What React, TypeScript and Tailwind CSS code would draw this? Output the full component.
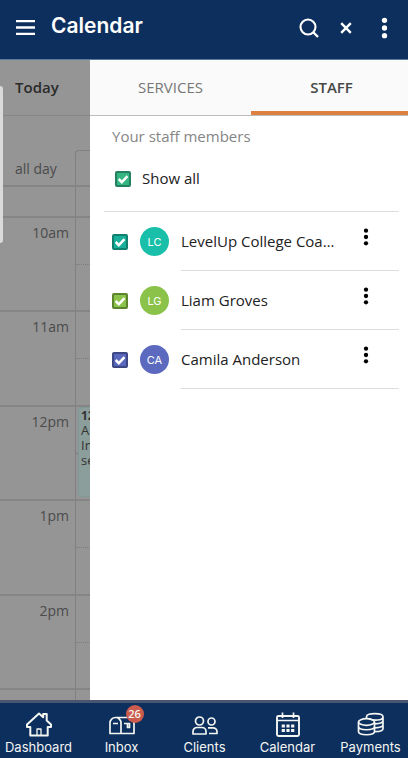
import { useState, type ReactNode } from "react"

type Member = {
  initials: string
  name: string
  avatar: string
  box: string
}

const members: Member[] = [
  { initials: "LC", name: "LevelUp College Coaching", avatar: "bg-[#19bfa8]", box: "border-[#12806f] bg-[#19b09b]" },
  { initials: "LG", name: "Liam Groves", avatar: "bg-[#8bc34a]", box: "border-[#5c842f] bg-[#8bc34a]" },
  { initials: "CA", name: "Camila Anderson", avatar: "bg-[#5b6abf]", box: "border-[#3c4783] bg-[#5968bd]" },
]

const hours = [
  { label: "10am", height: "h-[94px]" },
  { label: "11am", height: "h-[95px]" },
  { label: "12pm", height: "h-[94px]" },
  { label: "1pm", height: "h-[95px]" },
  { label: "2pm", height: "h-[94px]" },
]

const Dots = ({ className }: { className: string }) => (
  <svg viewBox="0 0 6 20" fill="currentColor" className={className} aria-hidden="true">
    <circle cx="3" cy="3" r="2.4" />
    <circle cx="3" cy="10" r="2.4" />
    <circle cx="3" cy="17" r="2.4" />
  </svg>
)

const Header = () => (
  <header className="flex h-15 shrink-0 items-center border-b border-[#5a7c9c] bg-[#0d2f5e] pb-1 pl-4 pr-5 text-white">
    <button type="button" aria-label="Menu">
      <svg viewBox="0 0 19 15" className="h-[15px] w-[19px]" stroke="currentColor" strokeWidth="2.3">
        <path d="M0 1.200h19M0 7.500h19M0 13.800h19" />
      </svg>
    </button>
    <h1 className="ml-4 pb-[3px] font-['Inter',sans-serif] text-[21px] leading-7 font-semibold">Calendar</h1>
    <div className="ml-auto flex items-center">
      <button type="button" aria-label="Search">
        <svg viewBox="0 0 20 20" className="size-5" fill="none" stroke="currentColor" strokeWidth="2.1">
          <circle cx="9" cy="9" r="7.500" />
          <path d="M14 14l5 5" strokeWidth="2.400" />
        </svg>
      </button>
      <button type="button" aria-label="Close" className="ml-[21px]">
        <svg viewBox="0 0 12 12" className="size-3" fill="none" stroke="currentColor" strokeWidth="2.400">
          <path d="M1.200 1.200l9.600 9.600M10.800 1.200l-9.600 9.600" />
        </svg>
      </button>
      <button type="button" aria-label="More options" className="ml-[29px]">
        <Dots className="h-[22px] w-[7px]" />
      </button>
    </div>
  </header>
)

const DayGrid = () => (
  <section className="relative flex w-[90px] shrink-0 flex-col overflow-hidden bg-[#959595] text-[14px] text-[#4b4b4b]">
    <div className="flex h-14 shrink-0 items-center border-b border-[#858585] pl-[15px] text-[15px] font-semibold text-[#2b2b2b]">
      Today
    </div>
    <div className="h-[34px] shrink-0" />
    <div className="flex h-[37px] shrink-0 border-b-2 border-[#858585]">
      <div className="w-[75px] pl-[15px] pt-[9px] leading-5">all day</div>
      <div className="flex-1 rounded-tl-sm border-l border-t border-[#808080]" />
    </div>
    <div className="flex h-[31px] shrink-0 border-b-2 border-[#858585]">
      <div className="ml-[75px] flex-1 border-l border-[#808080]" />
    </div>
    {hours.map((hour) => (
      <div key={hour.label} className={`flex shrink-0 border-b-2 border-[#858585] ${hour.height}`}>
        <div className="w-[75px] pr-[6px] pt-[5px] text-right leading-5">{hour.label}</div>
        <div className="relative flex-1 border-l border-[#808080]">
          <div className="h-[47px] border-b border-dotted border-[#7d7d7d]" />
          {hour.label === "12pm" && (
            <div className="absolute bottom-0.5 left-0.5 right-0 top-0 overflow-hidden rounded-l-sm border-y border-l border-[#7f9896] bg-[#8b9e9b] pl-0.5 text-[13px] leading-[15px] text-[#333]">
              <b className="block text-[12px]">12</b>
              <span className="block">A</span>
              <span className="block">In</span>
              <span className="block">se</span>
            </div>
          )}
        </div>
      </div>
    ))}
    <div className="flex min-h-2.5 flex-1">
      <div className="ml-[75px] flex-1 border-l border-[#808080]" />
    </div>
    <div className="absolute left-0 top-[26px] h-[157px] w-[3px] rounded-r bg-[#dadada]" />
  </section>
)

type CheckProps = { id: string; box: string; checked: boolean; onChange: () => void }

const Check = ({ id, box, checked, onChange }: CheckProps) => (
  <span className="relative flex size-4 shrink-0">
    <input
      id={id}
      type="checkbox"
      checked={checked}
      onChange={onChange}
      className={`size-4 appearance-none rounded-xs border-2 ${box}`}
    />
    {checked && (
      <svg viewBox="0 0 16 16" className="pointer-events-none absolute inset-0" fill="none" stroke="white" strokeWidth="2.500">
        <path d="M3.700 8l3.100 3.100 5.700-6" />
      </svg>
    )}
  </span>
)

const StaffPanel = () => {
  const [selected, setSelected] = useState(members.map((m) => m.initials))
  const allSelected = selected.length === members.length

  const toggle = (initials: string) =>
    setSelected((current) =>
      current.includes(initials) ? current.filter((i) => i !== initials) : [...current, initials],
    )

  return (
    <aside className="min-w-0 flex-1 overflow-hidden bg-white">
      <nav className="-mr-1 grid h-14 grid-cols-2 border-b border-[#bdbdbd] bg-[#fafafa] text-[15px]">
        <button type="button" className="text-[#777]">SERVICES</button>
        <button type="button" className="border-b-4 border-[#dd8040] pt-[3px] font-semibold text-[#484848]">STAFF</button>
      </nav>
      <div className="pl-3.5 pr-[9px]">
        <h2 className="pl-2 pt-2.5 text-[15px] leading-5 text-[#858585]">Your staff members</h2>
        <div className="flex h-[66px] items-center gap-[11px] border-b border-[#ddd] pl-[11px]">
          <Check
            id="all"
            box="border-[#248060] bg-[#35b581]"
            checked={allSelected}
            onChange={() => setSelected(allSelected ? [] : members.map((m) => m.initials))}
          />
          <label htmlFor="all" className="pb-0.5 text-[15px] leading-5 text-[#222]">Show all</label>
        </div>
        <ul>
          {members.map((m) => (
            <li key={m.initials} className="flex h-[59px] items-center pl-2">
              <Check
                id={m.initials}
                box={m.box}
                checked={selected.includes(m.initials)}
                onChange={() => toggle(m.initials)}
              />
              <span className={`ml-3 flex size-[29px] shrink-0 items-center justify-center rounded-full pt-px font-['Inter',sans-serif] text-[11px] text-white ${m.avatar}`}>
                {m.initials}
              </span>
              <div className="ml-3 flex h-full min-w-0 flex-1 items-center border-b border-[#ddd]">
                <label htmlFor={m.initials} className="w-[155px] truncate text-[15px] leading-5 text-[#222]">
                  {m.name}
                </label>
                <button type="button" aria-label={`Options for ${m.name}`} className="ml-auto mr-[30px] pb-2 text-black">
                  <Dots className="h-[18px] w-1.5" />
                </button>
              </div>
            </li>
          ))}
        </ul>
      </div>
    </aside>
  )
}

const NavIcon = ({ children }: { children: ReactNode }) => (
  <svg viewBox="0 0 28 26" className="h-[26px] w-7" fill="none" stroke="currentColor" strokeWidth="1.700" strokeLinejoin="round" aria-hidden="true">
    {children}
  </svg>
)

const tabs = [
  {
    label: "Dashboard",
    icon: (
      <NavIcon>
        <path d="M14 1.500L2 12.500v2.500h3.300v8.500h17.400V15H26v-2.500L21.700 8.600V2h-3.500v3.300z" strokeWidth="2" />
        <path d="M12 23.500v-6.500h4v6.500" strokeWidth="1.300" />
      </NavIcon>
    ),
  },
  {
    label: "Inbox",
    badge: 26,
    icon: (
      <NavIcon>
        <path d="M7.500 5.500h13a5.500 5.500 0 0 1 5.500 5.500v10.500H2V11a5.500 5.500 0 0 1 11 0v10.500M7.500 5.500a5.500 5.500 0 0 1 5.500 5.500M5 11.500h5M16 11.500h5.500v4h-2v-4" />
      </NavIcon>
    ),
  },
  {
    label: "Clients",
    icon: (
      <NavIcon>
        <circle cx="8.500" cy="9" r="4" />
        <circle cx="20.500" cy="9.500" r="3.500" />
        <path d="M2 22v-2.500a4 4 0 0 1 4-4h5a4 4 0 0 1 4 4V22zM17 15.800h5a4 4 0 0 1 4 4v1.700h-8" />
      </NavIcon>
    ),
  },
  {
    label: "Calendar",
    icon: (
      <NavIcon>
        <rect x="3" y="4" width="22" height="20" rx="1.500" strokeWidth="1.900" />
        <path d="M3 8.500h22M8.500 .5V6M19.500 .5V6" />
        <path d="M7.700 14h12.600M7.700 18.500h12.600" strokeWidth="3.200" strokeDasharray="3.200 1.500" />
      </NavIcon>
    ),
  },
  {
    label: "Payments",
    icon: (
      <NavIcon>
        <ellipse cx="9.500" cy="10" rx="8" ry="3.300" />
        <path d="M1.500 10v4.500c0 4.300 16 4.300 16 0V10M1.500 14.500V19.500c0 4.300 16 4.300 16 0v-5M9.500 6.500V4.700c0-4.200 16.500-4.200 16.500 0s-10 4-14 2M26 4.700v12c0 1.600-3 2.800-8 3M26 8.800c0 1.600-3 2.800-8 3M26 12.800c0 1.600-3 2.800-8 3" />
      </NavIcon>
    ),
  },
]

const BottomNav = () => (
  <nav className="shrink-0 overflow-hidden border-t-[3px] border-[#4a5670] bg-[#0d2f5e] font-['Inter',sans-serif] text-[#f4f6f2]">
    <div className="-ml-[3px] -mr-1 grid grid-cols-5">
      {tabs.map((tab) => (
        <a key={tab.label} href="#" className="flex h-14 flex-col items-center pt-[9px]">
          <span className="relative">
            {tab.icon}
            {tab.badge && (
              <span className="absolute -right-2 -top-[7px] flex size-[18px] items-center justify-center rounded-full bg-[#cb5b4c] font-['Open_Sans',sans-serif] text-[11px] font-semibold">
                {tab.badge}
              </span>
            )}
          </span>
          <span className="text-[13px] leading-[18px]">{tab.label}</span>
        </a>
      ))}
    </div>
  </nav>
)

export default function App() {
  return (
    <div className="flex min-h-screen flex-col font-['Open_Sans',sans-serif]">
      <Header />
      <main className="flex flex-1">
        <DayGrid />
        <StaffPanel />
      </main>
      <BottomNav />
    </div>
  )
}
